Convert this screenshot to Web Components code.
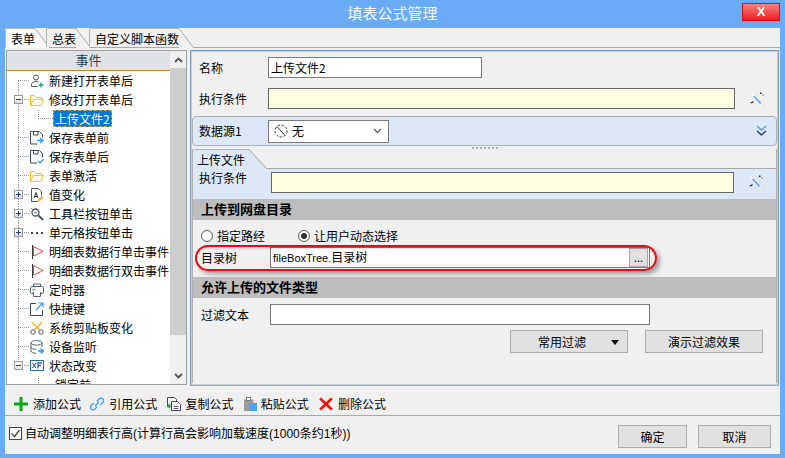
<!DOCTYPE html>
<html lang="zh">
<head>
<meta charset="utf-8">
<title>填表公式管理</title>
<style>
html, body { margin: 0; padding: 0; overflow: hidden; }
body { font: 12px/16px "Noto Sans CJK SC", "Liberation Sans", sans-serif; color: #000; }
.latin { font-family: "Liberation Sans", sans-serif; }
</style>
</head>
<body>

<fm-window heading="填表公式管理">
  <fm-tabstrip>
    <fm-tab active>表单</fm-tab>
    <fm-tab style="margin-right:-2px">总表</fm-tab>
    <fm-tab>自定义脚本函数</fm-tab>
  </fm-tabstrip>

  <fm-split>
    <fm-tree slot="left" heading="事件">
      <fm-node icon="person" trunk="first">新建打开表单后</fm-node>
      <fm-node icon="folder" toggle="minus">修改打开表单后</fm-node>
      <fm-node child selected trunk="pass">上传文件2</fm-node>
      <fm-node icon="savein">保存表单前</fm-node>
      <fm-node icon="savecheck">保存表单后</fm-node>
      <fm-node icon="folder">表单激活</fm-node>
      <fm-node icon="valuedoc" toggle="plus">值变化</fm-node>
      <fm-node icon="tools" toggle="plus">工具栏按钮单击</fm-node>
      <fm-node icon="dots" toggle="plus">单元格按钮单击</fm-node>
      <fm-node icon="flag">明细表数据行单击事件</fm-node>
      <fm-node icon="flag">明细表数据行双击事件</fm-node>
      <fm-node icon="timer">定时器</fm-node>
      <fm-node icon="shortcut">快捷键</fm-node>
      <fm-node icon="scissors">系统剪贴板变化</fm-node>
      <fm-node icon="device">设备监听</fm-node>
      <fm-node icon="state" toggle="minus" trunk="last">状态改变</fm-node>
      <fm-node child trunk="none">锁定前</fm-node>
    </fm-tree>

    <fm-panel slot="right">
      <fm-row label="名称" width="69" style="margin-top:6px">
        <fm-input style="width:214px">上传文件2</fm-input>
      </fm-row>
      <fm-row label="执行条件" width="69" style="margin-top:10px">
        <fm-input tone="formula" style="width:467px"></fm-input>
        <fm-icon name="wand" style="margin-left:15px"></fm-icon>
      </fm-row>
      <fm-source></fm-source>
      <fm-grip></fm-grip>
      <fm-sub heading="上传文件">
        <fm-section>上传到网盘目录</fm-section>
        <fm-radios>
          <fm-radio>指定路经</fm-radio>
          <fm-radio checked style="margin-left:33px">让用户动态选择</fm-radio>
        </fm-radios>
        <fm-row label="目录树" width="69">
          <fm-input picker style="width:380px"><span class="latin" style="font-size:11px">fileBoxTree.</span>目录树</fm-input>
        </fm-row>
        <fm-section style="margin-top:9px">允许上传的文件类型</fm-section>
        <fm-row label="过滤文本" width="69" style="margin-top:6px">
          <fm-input style="width:380px"></fm-input>
        </fm-row>
        <fm-actions>
          <fm-button menu style="width:118px">常用过滤</fm-button>
          <fm-button style="width:118px">演示过滤效果</fm-button>
        </fm-actions>
        <fm-callout></fm-callout>
      </fm-sub>
    </fm-panel>
  </fm-split>

  <fm-toolbar>
    <fm-tool icon="plus">添加公式</fm-tool>
    <fm-tool icon="link">引用公式</fm-tool>
    <fm-tool icon="copy">复制公式</fm-tool>
    <fm-tool icon="paste" gap="4">粘贴公式</fm-tool>
    <fm-tool icon="cross" gap="5">删除公式</fm-tool>
  </fm-toolbar>

  <fm-footer>
    <fm-check slot="left">自动调整明细表行高<span class="latin">(</span>计算行高会影响加载速度<span class="latin">(1000</span>条约<span class="latin">1</span>秒<span class="latin">))</span></fm-check>
    <fm-button slot="right" style="width:69px">确定</fm-button>
    <fm-button slot="right" style="width:73px;margin-left:11px">取消</fm-button>
  </fm-footer>
</fm-window>

<script>
// 14x14 icons, drawn to follow the ones in the tree and the toolbar
const ICONS = {
  person: `<circle cx="6" cy="3.5" r="2.5" fill="none" stroke="#555"/><path d="M1.5 12.5v-2c0-2 2-3 4.5-3 1 0 2 .2 2.6.6M1.5 12.5h6" fill="none" stroke="#555"/><path d="M11 8.500v5M8.500 11h5" stroke="#1ab37a" stroke-width="1.400"/>`,
  folder: `<path d="M.5 12.500v-10h4l1.500 2h6v2M.5 12.500h10.500l2.500-6H3.500z" fill="#fff8e0" stroke="#ffc21a"/>`,
  savein: `<path d="M12.500 6.500v-3l-3-3h-9v12.500h7" fill="#fff" stroke="#3d4a5a"/><path d="M3.500.500v3.500h4.500V.500" fill="none" stroke="#3d4a5a"/><path d="M7 9.500h5M10 7l3 2.500-3 2.500" fill="none" stroke="#2e9be6" stroke-width="1.300"/>`,
  savecheck: `<path d="M.5.500h9l3 3v4M7 13H.5V.500" fill="#fff" stroke="#3d4a5a"/><path d="M3.500.500v3.500h4.500V.500" fill="none" stroke="#3d4a5a"/><path d="M8 11l2 2 3.500-4" fill="none" stroke="#2e9be6" stroke-width="1.200"/>`,
  valuedoc: `<path d="M8 13.500H1.500V.500h7l3 3v4" fill="#fff" stroke="#555"/><path d="M4 10l2-5.500L8 10M4.800 8.500h2.500" fill="none" stroke="#333"/><path d="M7.500 13.500l1-2.500 3.500-3 1.500 1.500-3.500 3.200z" fill="#f5a623"/>`,
  tools: `<circle cx="5.500" cy="5.500" r="3.500" fill="#fff" stroke="#4a5560" stroke-width="1.300"/><path d="M8.500 8.500l4.500 4.500" stroke="#4a5560" stroke-width="2"/><path d="M1 1l3 3" stroke="#8a949e"/><circle cx="5.500" cy="5.500" r="1.200" fill="#7fa8cc"/>`,
  dots: `<path d="M1 6h2v2H1zM6 6h2v2H6zM11 6h2v2h-2z" fill="#3a4660"/>`,
  flag: `<path d="M2.500 0v14" stroke="#3a3a3a"/><path d="M3.500 1.500L13 6.500 3.500 11z" fill="#fff" stroke="#f04848"/>`,
  timer: `<path d="M3.500 3.500v-2.500h7v2.500" fill="none" stroke="#55636f"/><rect x=".5" y="3.500" width="13" height="7" rx="1" fill="#fff" stroke="#55636f"/><path d="M2.500 6.500h3" stroke="#2e9be6" stroke-width="1.300"/><path d="M3.500 9v4.500h7V9" fill="#fff" stroke="#55636f"/>`,
  shortcut: `<path d="M6 1.500H.5v12h12V8" fill="none" stroke="#3d4a5a"/><path d="M6 8l6.500-6.500M8.500 1h4.500v4.500" fill="none" stroke="#2e9be6" stroke-width="1.200"/>`,
  scissors: `<circle cx="3" cy="11" r="2.200" fill="none" stroke="#555"/><circle cx="11" cy="11" r="2.200" fill="none" stroke="#555"/><path d="M4.500 9L12 1M9.500 9L2 1" stroke="#f0b429" stroke-width="1.300"/>`,
  device: `<ellipse cx="6.500" cy="2.800" rx="5.500" ry="2.300" fill="#fff" stroke="#55636f"/><path d="M1 3v8c0 1.300 2.500 2.300 5 2.300M12 3v4M1 7c0 1.300 2.500 2.300 5.500 2.300" fill="none" stroke="#55636f"/><path d="M8 11h4.500M10.500 8.500l3 2.500-3 2.500" fill="none" stroke="#2e9be6" stroke-width="1.300"/>`,
  state: `<rect x=".5" y="1.500" width="13" height="10" fill="#fff" stroke="#2b6cb0"/><path d="M2.500 4l3.500 5M6 4L2.500 9" stroke="#2b6cb0" stroke-width="1.200"/><path d="M8 9.500V4h4M8 6.500h3" fill="none" stroke="#2b6cb0" stroke-width="1.300"/>`,
  plus: `<path d="M5.500 0h3v5.500H14v3H8.500V14h-3V8.500H0v-3h5.500z" fill="#0aa80a"/>`,
  link: `<path d="M7 4.500l2-2.500c1-1 3-1 4 .3.700 1 .500 2.300-.3 3.200L10.500 8M7 9.500L5 12c-1 1-3 1-4-.3-.700-1-.500-2.300.3-3.200L3.500 6M5 9l4-4" fill="none" stroke="#4aa3ee" stroke-width="1.500"/>`,
  copy: `<path d="M.5.500h7l2 2v3" fill="#fff" stroke="#445"/><path d="M.5.500v9h3" fill="none" stroke="#445"/><path d="M4.500 4.500h6l3 3v6h-9z" fill="#fff" stroke="#445"/><path d="M1 9h4M3 7l-2 2 2 2" fill="none" stroke="#10a040" stroke-width="1.200"/><path d="M6.500 9.500h5M6.500 11.500h5" stroke="#667"/>`,
  paste: `<path d="M1 2.500h9.500V6H6v8H1z" fill="#9a9a9a"/><rect x="3.500" y=".5" width="4" height="3" fill="#fff" stroke="#777"/><rect x="6" y="6" width="8" height="8" fill="#4aa3ee"/>`,
  cross: `<path d="M2 .5L7 5 12 .5l1.800 1.700L9 7l4.800 4.800L12 13.500 7 9l-5 4.500-1.800-1.700L5 7 .2 2.200z" fill="#ee1111"/>`,
  wand: `<path d="M2 1l11 11-1.500 1.500L1 2.500z" fill="#fff"/><path d="M4.500 3.500l7 7.500-1.500 1-7-7.500z" fill="#6fa6ec"/><path d="M.5 10.500l3-1.500v1.500l-2.500 1z" fill="#222"/><path d="M10 .5h1.500v1.500H10zM12.500 2.500h1v1h-1z" fill="#222"/><path d="M11.500 11.500l2.500 2" stroke="#cfd8e6"/>`,
  none: `<circle cx="7" cy="7" r="6" fill="#fff" stroke="#333" stroke-dasharray="2.500 1.500"/><path d="M3 2.500l8 9" stroke="#333"/>`
};

// small helper: every element gets its own template and an open shadow root
function makeTemplate(html) {
  const template = document.createElement('template');
  template.innerHTML = html;
  return template;
}

class FmElement extends HTMLElement {
  constructor() {
    super();
    const root = this.attachShadow({ mode: 'open' });
    root.appendChild(this.constructor.template.content.cloneNode(true));
  }
}

class FmIcon extends HTMLElement {
  static observedAttributes = ['name'];
  constructor() {
    super();
    this.attachShadow({ mode: 'open' });
  }
  attributeChangedCallback(attributeName, oldValue, newValue) {
    this.shadowRoot.innerHTML = `<style>:host{display:inline-flex;width:14px;height:14px;flex:none}svg{display:block}</style>
      <svg width="14" height="14" viewBox="0 0 14 14">${ICONS[newValue] || ''}</svg>`;
  }
}

class FmWindow extends FmElement {
  static template = makeTemplate(`<style>
    :host { display: flex; flex-direction: column; width: 785px; height: 458px; background: #6aabf6; box-sizing: border-box; padding-bottom: 4px; }
    .bar { display: grid; grid-template-columns: 1fr auto 1fr; height: 28px; flex: none; }
    .title { grid-column: 2; color: #f4f8ff; font-size: 15px; line-height: 25px; }
    .close { grid-column: 3; justify-self: end; margin: 3px 5px 0 0; width: 36px; height: 16px; border: 1px solid #e01018; border-bottom-color: #e8000a;
      background: linear-gradient(#f98080, #f45050 50%, #f01c24); color: #fff; font: bold 13px/16px "Liberation Sans", sans-serif; text-align: center; box-shadow: 0 0 1px #5b8fd8; }
    .client { flex: 1; min-height: 0; margin: 0 5px; background: #f0f0f0; display: flex; flex-direction: column; }
  </style>
  <div class="bar"><div class="title"></div><div class="close">X</div></div>
  <div class="client"><slot></slot></div>`);
  connectedCallback() {
    this.shadowRoot.querySelector('.title').textContent = this.getAttribute('heading');
  }
}

class FmTabstrip extends FmElement {
  static template = makeTemplate(`<style>
    :host { display: flex; height: 20px; flex: none; box-sizing: border-box; border-bottom: 1px solid #a9a9a9; }
  </style><slot></slot>`);
}

class FmTab extends FmElement {
  static template = makeTemplate(`<style>
    :host { display: flex; height: 20px; box-sizing: border-box; margin-right: -4px; }
    .body { height: 19px; box-sizing: border-box; border-top: 1px solid #b4b4b4; border-left: 1px solid #b4b4b4; border-top-left-radius: 2px; padding: 2px 0 0 5px; line-height: 16px; background: #f0f0f0; white-space: nowrap; }
    :host([active]) .body { height: 20px; background: #fbfbfb; }
    :host([active]) svg .fill { fill: #fbfbfb; }
    svg { display: block; }
  </style>
  <div class="body"><slot></slot></div>
  <svg width="15" height="20" viewBox="0 0 15 20"><path class="fill" d="M0 0.500L14 19V20H0z" fill="#f0f0f0"/><path d="M0 0.500L14 19" fill="none" stroke="#a9a9a9"/></svg>`);
}

class FmSplit extends FmElement {
  static template = makeTemplate(`<style>
    :host { display: flex; flex: none; height: 338px; padding: 2px 1px 0 1px; box-sizing: border-box; gap: 3px; }
  </style><slot name="left"></slot><slot name="right"></slot>`);
}

class FmTree extends FmElement {
  static template = makeTemplate(`<style>
    :host { display: flex; width: 181px; height: 335px; box-sizing: border-box; border: 1px solid #a0a0a0; background: #fff; }
    .main { flex: 1; min-width: 0; display: flex; flex-direction: column; }
    .head { height: 20px; flex: none; box-sizing: border-box; background: #dfe3e8; border-bottom: 1px solid #c8861c; text-align: center; color: #2f4550; font-size: 13px; line-height: 18px; }
    .list { flex: 1; overflow: hidden; }
    .scroll { width: 16px; flex: none; display: flex; flex-direction: column; background: #f0f0f0; }
    .btn { height: 17px; flex: none; display: flex; align-items: center; justify-content: center; }
    .thumb { height: 267px; flex: none; background: #cdcdcd; }
    .rest { flex: 1; }
  </style>
  <div class="main"><div class="head"></div><div class="list"><slot></slot></div></div>
  <div class="scroll">
    <div class="btn"><svg width="9" height="6" viewBox="0 0 9 6"><path d="M1 5l3.500-3.500L8 5" fill="none" stroke="#555" stroke-width="1.800"/></svg></div>
    <div class="thumb"></div><div class="rest"></div>
    <div class="btn"><svg width="9" height="6" viewBox="0 0 9 6"><path d="M1 1l3.500 3.500L8 1" fill="none" stroke="#555" stroke-width="1.800"/></svg></div>
  </div>`);
  connectedCallback() {
    this.shadowRoot.querySelector('.head').textContent = this.getAttribute('heading');
  }
}

class FmNode extends FmElement {
  static template = makeTemplate(`<style>
    :host { --dot: repeating-linear-gradient(90deg, #9a9a9a 0 1px, transparent 1px 2px); --vdot: repeating-linear-gradient(0deg, #9a9a9a 0 1px, transparent 1px 2px);
      display: flex; align-items: center; height: 19px; padding-left: 7px; white-space: nowrap; line-height: 17px;
      background-image: var(--vdot), var(--dot); background-repeat: no-repeat;
      background-size: 1px 19px, 12px 1px; background-position: 11px 0, 11px 9px; }
    :host([trunk="first"]) { background-size: 1px 10px, 12px 1px; background-position: 11px 9px, 11px 9px; }
    :host([trunk="last"]) { background-size: 1px 10px, 12px 1px; background-position: 11px 0, 11px 9px; }
    :host([child]) { background-image: var(--vdot), var(--dot), var(--vdot); background-size: 1px 19px, 15px 1px, 1px 10px; background-position: 11px 0, 31px 9px, 31px 0; }
    :host([child][trunk="none"]) { background-image: var(--dot), var(--vdot); background-size: 13px 1px, 1px 10px; background-position: 31px 9px, 31px 0; }
    .toggle { width: 9px; height: 9px; flex: none; margin-right: 7px; box-sizing: border-box; border: 1px solid #9a9a9a; background: linear-gradient(#fff, #dcdcdc); visibility: hidden; }
    .toggle svg { display: block; }
    :host([toggle]) .toggle { visibility: visible; }
    .plus { display: none; }
    :host([toggle="plus"]) .plus { display: inline; }
    .icon { margin-right: 5px; }
    :host([child]) .toggle, :host([child]) .icon { display: none; }
    :host([child]) .label { margin-left: 39px; padding: 0 2px; }
    :host([selected]) .label { background: #0078d7; color: #fff; outline: 1px dashed #f0a020; outline-offset: -1px; height: 17px; }
  </style>
  <span class="toggle"><svg width="7" height="7" viewBox="0 0 7 7" shape-rendering="crispEdges"><path d="M1 3h5v1H1z" fill="#24407a"/><path class="plus" d="M3 1h1v5H3z" fill="#24407a"/></svg></span>
  <fm-icon class="icon"></fm-icon>
  <span class="label"><slot></slot></span>`);
  connectedCallback() {
    this.shadowRoot.querySelector('.icon').setAttribute('name', this.getAttribute('icon') || '');
  }
}

class FmPanel extends FmElement {
  static template = makeTemplate(`<style>
    :host { display: block; width: 589px; height: 336px; box-sizing: border-box; border: 1px solid #7f9db9; outline: 1px solid #c4ccd4; outline-offset: -2px; border-bottom: 2px solid #a5a5a5; }
  </style><slot></slot>`);
}

class FmRow extends FmElement {
  static template = makeTemplate(`<style>
    :host { display: flex; align-items: center; padding-left: 8px; height: 21px; }
    .label { flex: none; white-space: nowrap; }
  </style><div class="label"></div><slot></slot>`);
  connectedCallback() {
    const label = this.shadowRoot.querySelector('.label');
    label.textContent = this.getAttribute('label');
    label.style.width = this.getAttribute('width') + 'px';
  }
}

class FmInput extends FmElement {
  static template = makeTemplate(`<style>
    :host { display: flex; align-items: center; height: 21px; box-sizing: border-box; border: 1px solid #7a7a7a; background: #fff; padding-left: 2px; flex: none; white-space: nowrap; line-height: 17px; }
    :host([tone="formula"]) { background: #ffffe1; border-color: #666; }
    .text { flex: 1; min-width: 0; }
    .pick { display: none; width: 19px; height: 19px; box-sizing: border-box; border: 1px solid #a8a8a8; background: #e1e1e1; margin-right: 1px; text-align: center; line-height: 17px; font-size: 11px; }
    :host([picker]) .pick { display: block; }
  </style><span class="text"><slot></slot></span><span class="pick">...</span>`);
}

class FmSource extends FmElement {
  static template = makeTemplate(`<style>
    :host { display: flex; align-items: center; height: 30px; margin: 7px 1px 0 1px; box-sizing: border-box; border: 1px solid #b0b0b0; border-radius: 4px; background: #dce8f7; padding: 0 9px 0 6px; }
    .label { width: 69px; flex: none; }
    .combo { display: flex; align-items: center; width: 121px; height: 23px; box-sizing: border-box; border: 1px solid #7a7a7a; background: #fff; padding: 0 6px 0 5px; }
    .value { flex: 1; margin-left: 4px; }
    .more { margin-left: auto; display: block; }
  </style>
  <span class="label">数据源1</span>
  <div class="combo"><fm-icon name="none"></fm-icon><span class="value">无</span>
    <svg width="9" height="6" viewBox="0 0 9 6"><path d="M1 1l3.500 3.500L8 1" fill="none" stroke="#555" stroke-width="1.200"/></svg></div>
  <svg class="more" width="11" height="12" viewBox="0 0 11 12"><path d="M1 1l4.500 4L10 1" fill="none" stroke="#6a94cc" stroke-width="1.500"/><path d="M1 6l4.500 4L10 6" fill="none" stroke="#2c3e60" stroke-width="1.500"/></svg>`);
}

class FmGrip extends FmElement {
  static template = makeTemplate(`<style>
    :host { display: flex; justify-content: center; align-items: center; height: 3px; }
    i { width: 26px; height: 2px; background: repeating-linear-gradient(90deg, #b0b0b0 0 2px, transparent 2px 4px); }
  </style><i></i>`);
}

class FmSub extends FmElement {
  static template = makeTemplate(`<style>
    :host { display: block; position: relative; height: 234px; margin: 0 1px; box-sizing: border-box; border-left: 1px solid #b0b0b0; border-right: 1px solid #b0b0b0; }
    .tabs { display: flex; height: 20px; box-sizing: border-box; }
    .tab { width: 56px; height: 20px; box-sizing: border-box; background: #dce8f7; border-top: 1px solid #b0b0b0; border-top-left-radius: 3px; padding: 1px 0 0 4px; line-height: 17px; }
    .tabs svg { display: block; flex: none; }
    .line { flex: 1; border-bottom: 1px solid #a9a9a9; box-sizing: border-box; height: 20px; }
    .cond { display: flex; height: 30px; background: #dce8f7; padding: 3px 0 0 6px; box-sizing: border-box; }
    .cond span { width: 72px; flex: none; margin-top: -2px; }
  </style>
  <div class="tabs"><div class="tab"></div>
    <svg width="18" height="20" viewBox="0 0 18 20"><path d="M0 0h0.500L18 19.500V20H0z" fill="#dce8f7"/><path d="M0 0.500L17.500 19.500H18" fill="none" stroke="#a9a9a9"/></svg><div class="line"></div></div>
  <div class="cond"><span>执行条件</span><fm-input tone="formula" style="width:463px"></fm-input><fm-icon name="wand" style="margin:3px 0 0 15px"></fm-icon></div>
  <slot></slot>`);
  connectedCallback() {
    this.shadowRoot.querySelector('.tab').textContent = this.getAttribute('heading');
  }
}

class FmSection extends FmElement {
  static template = makeTemplate(`<style>
    :host { display: block; height: 21px; background: #bdbdbd; padding-left: 8px; font-size: 13px; font-weight: bold; line-height: 20px; }
  </style><slot></slot>`);
}

class FmRadios extends FmElement {
  static template = makeTemplate(`<style>
    :host { display: flex; align-items: center; height: 27px; padding: 4px 0 0 8px; box-sizing: border-box; }
  </style><slot></slot>`);
}

class FmRadio extends FmElement {
  static template = makeTemplate(`<style>
    :host { display: inline-flex; align-items: center; white-space: nowrap; }
    i { width: 12px; height: 12px; box-sizing: border-box; border: 1px solid #555; border-radius: 50%; background: #fff; margin-right: 4px; display: flex; align-items: center; justify-content: center; }
    b { width: 6px; height: 6px; border-radius: 50%; background: #333; display: none; }
    :host([checked]) b { display: block; }
  </style><i><b></b></i><slot></slot>`);
}

class FmActions extends FmElement {
  static template = makeTemplate(`<style>
    :host { display: flex; gap: 17px; margin: 5px 0 0 317px; }
  </style><slot></slot>`);
}

class FmButton extends FmElement {
  static template = makeTemplate(`<style>
    :host { display: inline-flex; align-items: center; justify-content: center; height: 23px; box-sizing: border-box; border: 1px solid #acacac; background: #e1e1e1; position: relative; flex: none; white-space: nowrap; }
    .arrow { display: none; position: absolute; right: 3px; top: 9px; border: 4px solid transparent; border-top: 5px solid #111; border-bottom: 0; margin-right: 5px; }
    :host([menu]) .arrow { display: block; }
    :host([menu]) { justify-content: flex-start; padding-left: 27px; }
  </style><slot></slot><i class="arrow"></i>`);
}

// the red hand-drawn mark round the directory tree row, lies over the form
class FmCallout extends FmElement {
  static template = makeTemplate(`<style>
    :host { position: absolute; left: 2px; top: 96px; width: 462px; height: 26px; box-sizing: border-box; border: 2px solid #ec0a12; border-radius: 13px; box-shadow: 3px 3px 4px rgba(0,0,0,.35), inset 0 3px 3px -2px rgba(0,0,0,.18); pointer-events: none; }
  </style>`);
}

class FmToolbar extends FmElement {
  static template = makeTemplate(`<style>
    :host { display: grid; grid-template-columns: repeat(5, 76.25px); align-items: center; height: 30px; flex: none; box-sizing: border-box; padding: 6px 0 0 9px; border-bottom: 1px solid #a9a9a9; }
  </style><slot></slot>`);
}

class FmTool extends FmElement {
  static template = makeTemplate(`<style>
    :host { display: flex; align-items: center; white-space: nowrap; }
    .label { margin-left: 5px; }
  </style><fm-icon></fm-icon><span class="label"><slot></slot></span>`);
  connectedCallback() {
    this.shadowRoot.querySelector('fm-icon').setAttribute('name', this.getAttribute('icon'));
    if (this.hasAttribute('gap')) this.shadowRoot.querySelector('.label').style.marginLeft = this.getAttribute('gap') + 'px';
  }
}

class FmFooter extends FmElement {
  static template = makeTemplate(`<style>
    :host { display: flex; align-items: flex-start; flex: 1; padding: 9px 9px 0 4px; box-sizing: border-box; }
    .left { flex: 1; }
  </style><div class="left"><slot name="left"></slot></div><slot name="right"></slot>`);
}

class FmCheck extends FmElement {
  static template = makeTemplate(`<style>
    :host { display: inline-flex; align-items: center; white-space: nowrap; }
    svg { display: block; margin-right: 3px; flex: none; }
  </style><svg width="13" height="13" viewBox="0 0 13 13"><rect x=".5" y=".5" width="12" height="12" fill="#fff" stroke="#444"/><path d="M2.500 6.500l3 3 5-6.500" fill="none" stroke="#444" stroke-width="1.300"/></svg><span><slot></slot></span>`);
}

customElements.define('fm-icon', FmIcon);
customElements.define('fm-window', FmWindow);
customElements.define('fm-tabstrip', FmTabstrip);
customElements.define('fm-tab', FmTab);
customElements.define('fm-split', FmSplit);
customElements.define('fm-tree', FmTree);
customElements.define('fm-node', FmNode);
customElements.define('fm-panel', FmPanel);
customElements.define('fm-row', FmRow);
customElements.define('fm-input', FmInput);
customElements.define('fm-source', FmSource);
customElements.define('fm-grip', FmGrip);
customElements.define('fm-sub', FmSub);
customElements.define('fm-section', FmSection);
customElements.define('fm-radios', FmRadios);
customElements.define('fm-radio', FmRadio);
customElements.define('fm-actions', FmActions);
customElements.define('fm-button', FmButton);
customElements.define('fm-callout', FmCallout);
customElements.define('fm-toolbar', FmToolbar);
customElements.define('fm-tool', FmTool);
customElements.define('fm-footer', FmFooter);
customElements.define('fm-check', FmCheck);
</script>
</body>
</html>
